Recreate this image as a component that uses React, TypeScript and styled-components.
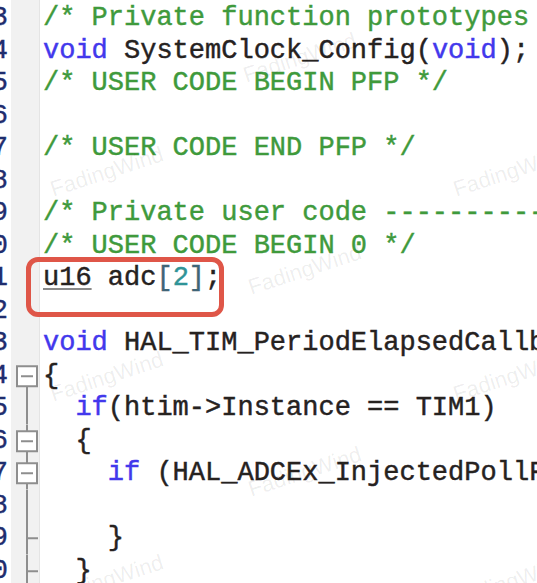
import React from "react";
import styled, { createGlobalStyle } from "styled-components";

const GlobalStyle = createGlobalStyle`
  html, body { margin: 0; padding: 0; background: #ffffff; }
  #root { width: 537px; height: 583px; }
`;

const MONO = `"Liberation Mono", "DejaVu Sans Mono", monospace`;
const ROW_H = 32.5;
const FOLD = "#8e8e8e";

const Editor = styled.div`
  position: relative;
  width: 537px;
  height: 583px;
  overflow: hidden;
  padding-top: 2px;
  box-sizing: border-box;
  background: linear-gradient(
    to right,
    #ffffff 0 11px,
    #f1f1f1 11px 39px,
    #e4e4e4 39px 40px,
    #ffffff 40px
  );
`;

const Row = styled.div`
  display: grid;
  grid-template-columns: 11px 29px 1fr;
  height: ${ROW_H}px;
`;

const LineNo = styled.div`
  font-family: ${MONO};
  font-size: 27px;
  line-height: ${ROW_H}px;
  color: #1f2d6e;
  -webkit-text-stroke: 0.4px #1f2d6e;
  text-align: right;
  overflow: hidden;
  white-space: nowrap;
  direction: rtl;
  padding-right: 3px;
`;

const FoldSvg = styled.svg`
  display: block;
  width: 29px;
  height: ${ROW_H}px;
`;

const Code = styled.div`
  font-family: ${MONO};
  font-size: 27px;
  line-height: ${ROW_H}px;
  white-space: pre;
  overflow: hidden;
  padding-left: 3px;
  color: #26221f;
`;

type TokKind = "c" | "k" | "p" | "n" | "b" | "u";

const tokColor: Record<TokKind, string> = {
  c: "#3f9a3c",
  k: "#4238ec",
  n: "#2f9397",
  b: "#3f6577",
  p: "#26221f",
  u: "#26221f",
};

const Tok = styled.span<{ $kind: TokKind }>`
  color: ${(p) => tokColor[p.$kind]};
  -webkit-text-stroke: 0.45px ${(p) => tokColor[p.$kind]};
  ${(p) =>
    p.$kind === "u"
      ? `text-decoration: underline; text-decoration-color: #8a8a8a;
         text-decoration-thickness: 2px; text-underline-offset: 3px;`
      : ""}
`;

const Highlight = styled.div`
  position: absolute;
  left: 26px;
  top: 257px;
  width: 198px;
  height: 60px;
  box-sizing: border-box;
  border: 5px solid #df5648;
  border-radius: 12px;
  pointer-events: none;
`;

const Watermark = styled.span`
  position: absolute;
  transform: translate(-50%, -50%) rotate(-18deg);
  font-family: "Liberation Sans", Arial, sans-serif;
  font-size: 22px;
  color: rgba(0, 0, 0, 0.075);
  white-space: nowrap;
  pointer-events: none;
`;

type Fold = "none" | "boxDown" | "boxBoth" | "line" | "tick";
type Line = { no: number; fold: Fold; toks: [TokKind, string][] };

const dash = "-".repeat(60);

const lines: Line[] = [
  { no: 53, fold: "none", toks: [["c", `/* Private function prototypes ${dash}*/`]] },
  {
    no: 54,
    fold: "none",
    toks: [
      ["k", "void"],
      ["p", " SystemClock_Config("],
      ["k", "void"],
      ["p", ");"],
    ],
  },
  { no: 55, fold: "none", toks: [["c", "/* USER CODE BEGIN PFP */"]] },
  { no: 56, fold: "none", toks: [] },
  { no: 57, fold: "none", toks: [["c", "/* USER CODE END PFP */"]] },
  { no: 58, fold: "none", toks: [] },
  { no: 59, fold: "none", toks: [["c", `/* Private user code ${dash}*/`]] },
  { no: 60, fold: "none", toks: [["c", "/* USER CODE BEGIN 0 */"]] },
  {
    no: 61,
    fold: "none",
    toks: [
      ["u", "u16"],
      ["p", " adc"],
      ["b", "["],
      ["n", "2"],
      ["b", "]"],
      ["p", ";"],
    ],
  },
  { no: 62, fold: "none", toks: [] },
  {
    no: 63,
    fold: "none",
    toks: [
      ["k", "void"],
      ["p", " HAL_TIM_PeriodElapsedCallback(TIM_HandleTypeDef *htim)"],
    ],
  },
  { no: 64, fold: "boxDown", toks: [["p", "{"]] },
  {
    no: 65,
    fold: "line",
    toks: [
      ["p", "  "],
      ["k", "if"],
      ["p", "(htim->Instance == TIM1)"],
    ],
  },
  { no: 66, fold: "boxBoth", toks: [["p", "  {"]] },
  {
    no: 67,
    fold: "boxBoth",
    toks: [
      ["p", "    "],
      ["k", "if"],
      ["p", " (HAL_ADCEx_InjectedPollForConversion(&hadc1, 10) == HAL_OK)"],
    ],
  },
  { no: 68, fold: "line", toks: [] },
  { no: 69, fold: "tick", toks: [["p", "    }"]] },
  { no: 70, fold: "tick", toks: [["p", "  }"]] },
];

const marks: [number, number][] = [
  [300, 58],
  [107, 172],
  [510, 172],
  [305, 270],
  [107, 377],
  [510, 377],
  [305, 472],
  [107, 580],
  [510, 582],
];

function FoldMarker({ fold }: { fold: Fold }) {
  const c = ROW_H / 2;
  return (
    <FoldSvg viewBox={`0 0 29 ${ROW_H}`}>
      {fold === "boxDown" && <rect x={15} y={c} width={2} height={ROW_H - c} fill={FOLD} />}
      {(fold === "boxBoth" || fold === "line" || fold === "tick") && (
        <rect x={15} y={0} width={2} height={ROW_H} fill={FOLD} />
      )}
      {fold === "tick" && <rect x={16} y={c - 1} width={11} height={2} fill={FOLD} />}
      {(fold === "boxDown" || fold === "boxBoth") && (
        <g>
          <rect x={6} y={c - 10} width={20} height={20} fill="#ffffff" stroke={FOLD} strokeWidth={2} />
          <rect x={10} y={c - 1} width={12} height={2} fill={FOLD} />
        </g>
      )}
    </FoldSvg>
  );
}

export default function App() {
  return (
    <>
      <GlobalStyle />
      <Editor>
        {lines.map((l) => (
          <Row key={l.no}>
            <LineNo>{l.no}</LineNo>
            <FoldMarker fold={l.fold} />
            <Code>
              {l.toks.map(([k, t], i) => (
                <Tok key={i} $kind={k}>
                  {t}
                </Tok>
              ))}
            </Code>
          </Row>
        ))}
        <Highlight />
        {marks.map(([x, y], i) => (
          <Watermark key={i} style={{ left: x, top: y }}>
            FadingWind
          </Watermark>
        ))}
      </Editor>
    </>
  );
}
